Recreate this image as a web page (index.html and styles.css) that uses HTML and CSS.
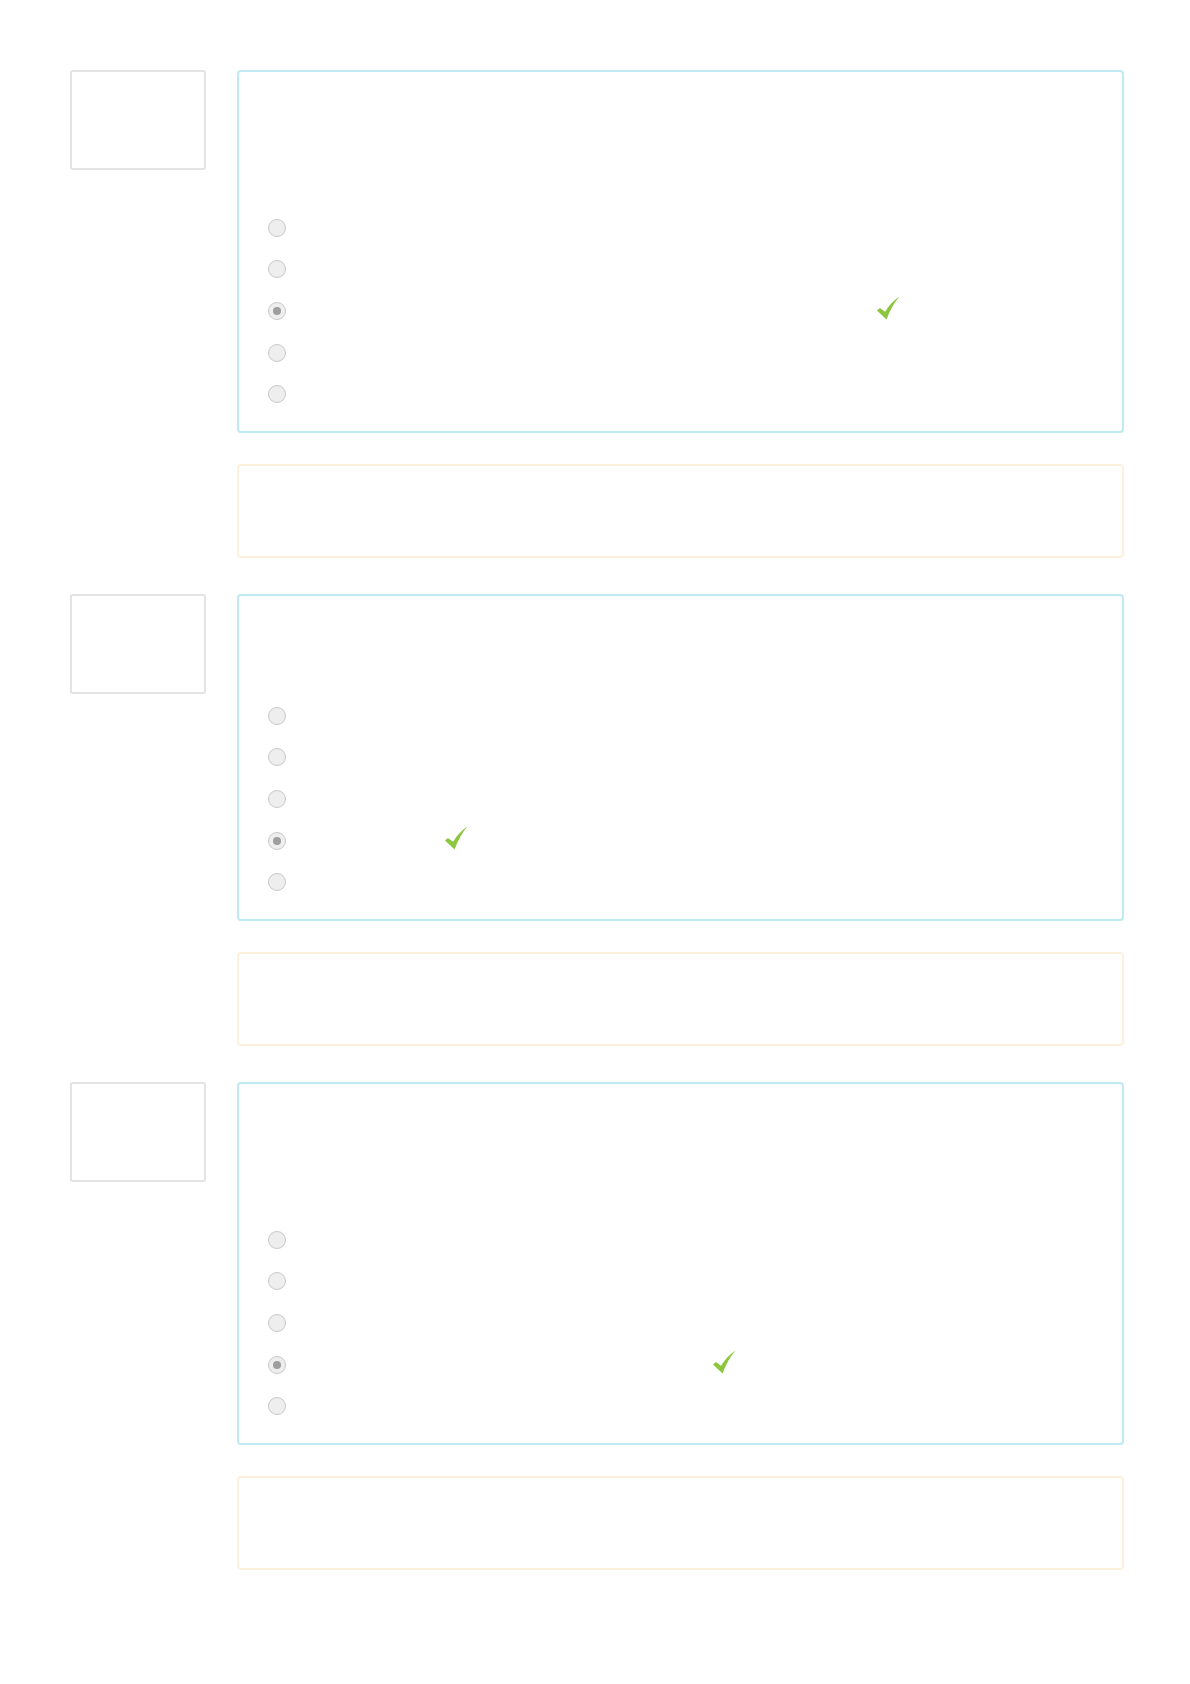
FILE: index.html
```
<!DOCTYPE html>
<html lang="en">

<head>
    <meta charset="UTF-8">
    <meta name="viewport" content="width=device-width, initial-scale=1.0">
    <title>quiz review</title>
    <link rel="stylesheet" href="styles.css">
</head>

<body>
<div class="wrap">
    <div class="que">
        <div class="info"></div>
        <div class="content">
            <div class="formulation">
                <div class="qtext tall"></div>
                <div class="answer">
                    <div class="opt"><span class="radio"></span></div>
                    <div class="opt"><span class="radio"></span></div>
                    <div class="opt"><span class="radio checked"></span><span class="label" style="width: 591px"></span><span class="tick"><svg viewBox="0 0 24 24" width="23" height="24"><path d="M0 14.5 L3 12 L8.5 16 C12 10 17 4 23.5 0 C18 6.5 13.5 14 10 24 Z" fill="#8cc63f"/></svg></span></div>
                    <div class="opt"><span class="radio"></span></div>
                    <div class="opt"><span class="radio"></span></div>
                </div>
            </div>
            <div class="outcome"></div>
        </div>
    </div>

    <div class="que">
        <div class="info"></div>
        <div class="content">
            <div class="formulation">
                <div class="qtext"></div>
                <div class="answer">
                    <div class="opt"><span class="radio"></span></div>
                    <div class="opt"><span class="radio"></span></div>
                    <div class="opt"><span class="radio"></span></div>
                    <div class="opt"><span class="radio checked"></span><span class="label" style="width: 159px"></span><span class="tick"><svg viewBox="0 0 24 24" width="23" height="24"><path d="M0 14.5 L3 12 L8.5 16 C12 10 17 4 23.5 0 C18 6.5 13.5 14 10 24 Z" fill="#8cc63f"/></svg></span></div>
                    <div class="opt"><span class="radio"></span></div>
                </div>
            </div>
            <div class="outcome"></div>
        </div>
    </div>

    <div class="que">
        <div class="info"></div>
        <div class="content">
            <div class="formulation">
                <div class="qtext tall"></div>
                <div class="answer">
                    <div class="opt"><span class="radio"></span></div>
                    <div class="opt"><span class="radio"></span></div>
                    <div class="opt"><span class="radio"></span></div>
                    <div class="opt"><span class="radio checked"></span><span class="label" style="width: 427px"></span><span class="tick"><svg viewBox="0 0 24 24" width="23" height="24"><path d="M0 14.5 L3 12 L8.5 16 C12 10 17 4 23.5 0 C18 6.5 13.5 14 10 24 Z" fill="#8cc63f"/></svg></span></div>
                    <div class="opt"><span class="radio"></span></div>
                </div>
            </div>
            <div class="outcome"></div>
        </div>
    </div>
</div>
</body>

</html>
```

FILE: styles.css
```
body {
    box-sizing: border-box;
    margin: 0;
    padding: 0;
    line-height: 1.2;
    font-family: "Open Sans", Roboto, sans-serif;
    background: #fff
}

.wrap {
    padding: 70px 0 0 70px;
    width: 1054px
}

.que {
    display: grid;
    grid-template-columns: 136px 1fr;
    column-gap: 31px;
    margin-bottom: 36px
}

.info {
    box-sizing: border-box;
    height: 100px;
    border: 2px solid #e3e3e3;
    border-radius: 3px
}

.content {
    display: flex;
    flex-direction: column;
    gap: 31px
}

.formulation {
    box-sizing: border-box;
    border: 2px solid #bfe9f3;
    border-radius: 4px;
    padding: 18px 30px 16px 29px
}

.qtext {
    height: 81px
}

.qtext.tall {
    height: 117px
}

.answer {
    display: flex;
    flex-direction: column
}

.opt {
    display: flex;
    align-items: center;
    height: 41.6px
}

.radio {
    box-sizing: border-box;
    flex: none;
    width: 18px;
    height: 18px;
    border: 1.5px solid #c8c8c8;
    border-radius: 50%;
    background: #eee;
    display: flex;
    align-items: center;
    justify-content: center
}

.radio.checked::after {
    content: "";
    width: 8px;
    height: 8px;
    border-radius: 50%;
    background: #9e9e9e
}

.label {
    display: inline-block;
    flex: none;
    height: 1px
}

.tick {
    display: flex;
    margin-top: -6px
}

.outcome {
    box-sizing: border-box;
    height: 94px;
    border: 2px solid #fdf0dd;
    border-radius: 4px
}
```
